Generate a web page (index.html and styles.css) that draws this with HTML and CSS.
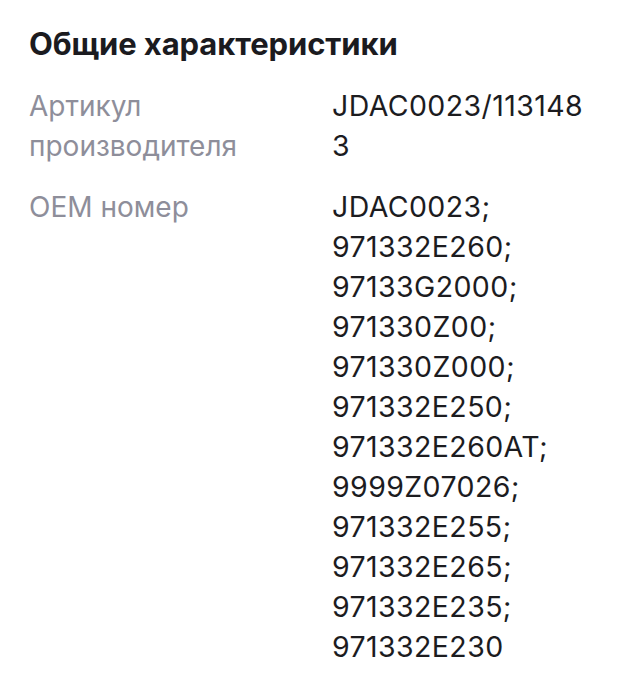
FILE: index.html
```html
<!DOCTYPE html>
<html lang="ru">
<head>
<meta charset="utf-8">
<link rel="stylesheet" href="styles.css">
</head>
<body>
<section class="specs">
  <h2 class="specs-title">Общие характеристики</h2>
  <dl class="specs-list">
    <div class="spec-row">
      <dt class="spec-label">Артикул производителя</dt>
      <dd class="spec-value">JDAC0023/1131483</dd>
    </div>
    <div class="spec-row">
      <dt class="spec-label">OEM номер</dt>
      <dd class="spec-value">JDAC0023;<br>971332E260;<br>97133G2000;<br>971330Z00;<br>971330Z000;<br>971332E250;<br>971332E260AT;<br>9999Z07026;<br>971332E255;<br>971332E265;<br>971332E235;<br>971332E230</dd>
    </div>
  </dl>
</section>
</body>
</html>
```
FILE: styles.css
```css
html, body {
  margin: 0;
  padding: 0;
  background: #ffffff;
}
body {
  font-family: Inter, "Noto Sans", sans-serif;
  color: #1c1c1f;
}
.specs {
  padding: 24px 0 0 29px;
}
.specs-title {
  margin: 0;
  font-size: 31px;
  line-height: 40px;
  font-weight: 700;
  letter-spacing: -0.1px;
  color: #1b1b1f;
}
.specs-list {
  margin: 22px 0 0 0;
  display: flex;
  flex-direction: column;
  gap: 21px;
}
.spec-row {
  display: grid;
  grid-template-columns: 303px 255px;
}
.spec-label {
  margin: 0;
  font-size: 28px;
  line-height: 40px;
  color: #8e8e9a;
  width: 230px;
}
.spec-value {
  margin: 0;
  font-size: 28.5px;
  line-height: 40px;
  letter-spacing: 0.4px;
  color: #1c1c1f;
  overflow-wrap: anywhere;
}
```
